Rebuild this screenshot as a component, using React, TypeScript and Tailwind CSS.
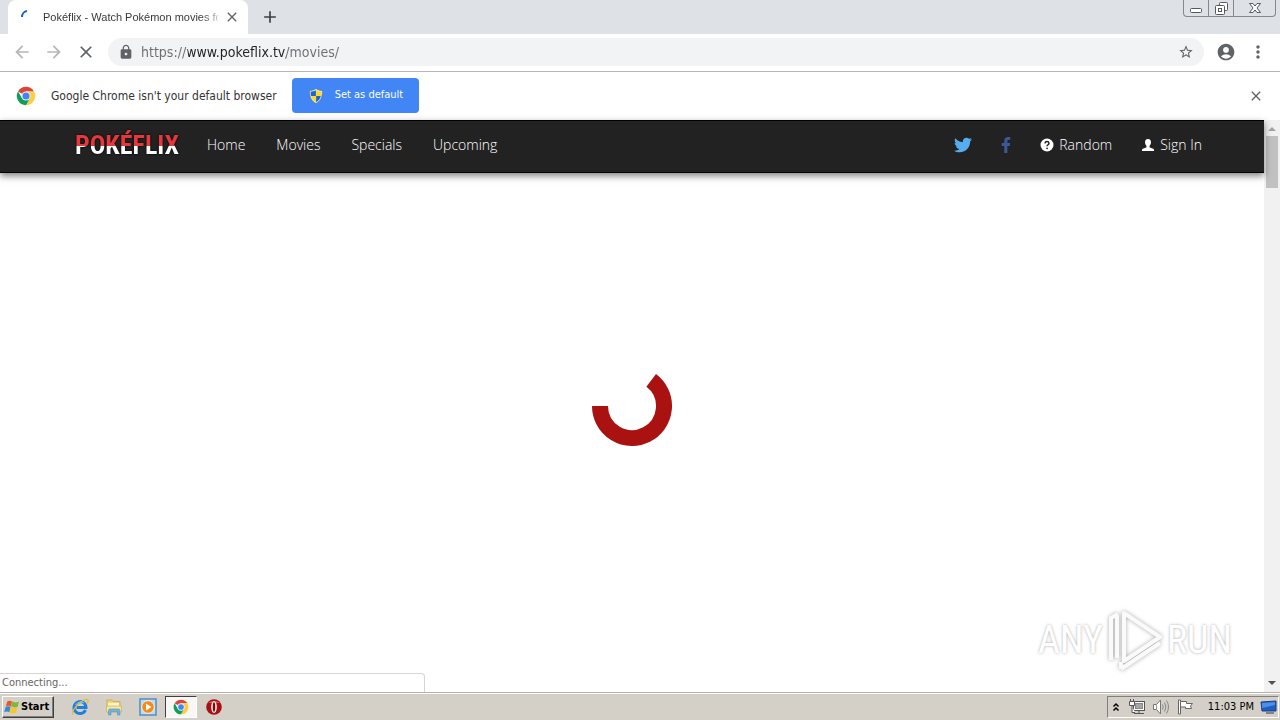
import { ReactNode } from "react";
import { FaFacebookF, FaTwitter } from "react-icons/fa";
import {
  MdAccountCircle,
  MdAdd,
  MdArrowBack,
  MdArrowForward,
  MdClose,
  MdLock,
  MdMoreVert,
  MdStarBorder,
} from "react-icons/md";

const ChromeLogo = ({ className }: { className: string }) => (
  <svg viewBox="0 0 48 48" className={className} aria-hidden="true">
    <circle cx="24" cy="24" r="22" fill="#fff" />
    <path d="M24 24 4.900 13A22 22 0 0 1 43.100 13H24Z" fill="#db4437" />
    <path d="M24 13h19.100A22 22 0 0 1 24 46l9.500-16.500Z" fill="#ffcd40" />
    <path d="M4.900 13 14.500 29.500 33.500 29.500 24 46A22 22 0 0 1 4.900 13Z" fill="#0f9d58" />
    <circle cx="24" cy="24" r="11" fill="#f1f1f1" />
    <circle cx="24" cy="24" r="8.500" fill="#4285f4" />
  </svg>
);

const Shield = () => (
  <svg viewBox="0 0 16 16" className="h-4 w-4" aria-hidden="true">
    <path d="M8 0.500C6 2 4 2.500 1.500 2.500 1.500 9 3 13 8 15.500 13 13 14.500 9 14.500 2.500 12 2.500 10 2 8 0.500Z" fill="#dfe6ee" stroke="#5b6f8a" strokeWidth="0.600" />
    <path d="M7.900 2.200C6 3.200 4.500 3.600 2.700 3.700 2.700 5.500 2.800 6.500 3.100 7.900H7.900Z" fill="#1f63c9" />
    <path d="M8.100 2.200C10 3.200 11.500 3.600 13.300 3.700 13.300 5.500 13.200 6.500 12.900 7.900H8.100Z" fill="#ffd91f" />
    <path d="M7.900 8.100H3.200C4 11 5.200 12.800 7.900 14.300Z" fill="#ffd91f" />
    <path d="M8.100 8.100H12.800C12 11 10.800 12.800 8.100 14.300Z" fill="#1f63c9" />
  </svg>
);

const WindowsFlag = () => (
  <svg viewBox="0 0 16 16" className="h-4 w-4" aria-hidden="true">
    <path d="M3.200 2.500Q5.500 1 8 2.400L6.900 7.500Q4.400 6 1.900 7.500Z" fill="#e8562a" />
    <path d="M8.300 2.600Q11.500 4.200 15 2.500L13.600 7.900Q10.200 9 7.100 7.600Z" fill="#7cb83a" />
    <path d="M1.600 7.900Q4 6.600 6.700 7.900L5.300 13.200Q2.800 11.700 0.200 13.200Z" fill="#3a86d8" />
    <path d="M7 8.100Q10 9.700 13.300 8.300L11.900 13.700Q8.800 15 5.600 13.400Z" fill="#f6c62c" />
  </svg>
);

const ExplorerIcon = () => (
  <svg viewBox="0 0 18 18" className="h-[18px] w-[18px]" aria-hidden="true">
    <path d="M14.500 12A6 6 0 1 1 15 9.500H5.500" fill="none" stroke="#1f7fdc" strokeWidth="3" />
    <path d="M2 16.500C-1 13 12 0 16.500 1.500 18 2.500 16.500 5 15.500 6" fill="none" stroke="#e9b93a" strokeWidth="1.400" />
    <path d="M4.500 7A6 6 0 0 1 13 5" fill="none" stroke="#7cc6f5" strokeWidth="1" />
  </svg>
);

const FolderIcon = () => (
  <svg viewBox="0 0 18 18" className="h-[18px] w-[18px]" aria-hidden="true">
    <path d="M2 2h5l1 1.500h7V14H2Z" fill="#f0d67a" stroke="#c9a64a" strokeWidth="0.800" />
    <path d="M3 5h11v4H3Z" fill="#fff7d0" />
    <path d="M1.500 8h15v6h-15Z" fill="#f8e49a" stroke="#d3b560" strokeWidth="0.800" />
    <path d="M3.500 17v-4.500q0-1.500 1.500-1.500h8.500q1.500 0 1.500 1.500V17h-2.500v-3.500h-6.500V17Z" fill="#6fb4e4" stroke="#3f88c0" strokeWidth="0.500" />
  </svg>
);

const MediaIcon = () => (
  <svg viewBox="0 0 18 18" className="h-[18px] w-[18px]" aria-hidden="true">
    <rect x="1" y="1" width="16" height="16" fill="#b9dcf4" stroke="#4b8fc9" strokeWidth="1.500" />
    <circle cx="9" cy="9" r="6.300" fill="#f28a1c" stroke="#fff" strokeWidth="0.800" />
    <path d="M7 5.500 12.500 9 7 12.500Z" fill="#fff" />
  </svg>
);

const OperaIcon = () => (
  <svg viewBox="0 0 18 18" className="h-[18px] w-[18px]" aria-hidden="true">
    <circle cx="9" cy="9" r="7.800" fill="#a81014" />
    <path d="M3 5a8 6 0 0 1 12 0Z" fill="#d9595b" />
    <ellipse cx="9" cy="9" rx="2.900" ry="6" fill="#f4e4e2" />
    <ellipse cx="9" cy="9" rx="1.200" ry="4.800" fill="#7a0a0c" />
  </svg>
);

const NetworkIcon = () => (
  <svg viewBox="0 0 18 18" className="h-[18px] w-[18px]" aria-hidden="true">
    <rect x="5.500" y="3.500" width="11" height="9" fill="#fff" stroke="#555" />
    <rect x="7.500" y="5.500" width="7" height="5" fill="#a6a6a6" stroke="#888" />
    <path d="M11 13v2M6 15.500h10" stroke="#555" />
    <path d="M2.500 1v3M5.500 1v3M1.500 3.500h5v4h-5ZM4 8v6.500h3" fill="#fff" stroke="#555" />
  </svg>
);

const SpeakerIcon = () => (
  <svg viewBox="0 0 18 18" className="h-[18px] w-[18px]" aria-hidden="true">
    <path d="M1.500 6.500h3l4-4.500v14l-4-4.500h-3Z" fill="#fff" stroke="#777" />
    <path d="M4.500 6.500v5" stroke="#999" />
    <path d="M10.500 6.500q1.500 2.500 0 5M12.500 4.500q3 4.500 0 9M14.500 2.500q4 6.500 0 13" fill="none" stroke="#888" />
  </svg>
);

const FlagIcon = () => (
  <svg viewBox="0 0 18 18" className="h-[18px] w-[18px]" aria-hidden="true">
    <path d="M2.500 2h2v14h-2Z" fill="#fff" stroke="#666" />
    <path d="M4.500 3.500h6v2h6l-2 2.500 1 2.500h-6v-1.500h-5Z" fill="#fff" stroke="#666" />
  </svg>
);

const MonitorIcon = () => (
  <svg viewBox="0 0 18 18" className="h-[18px] w-[18px]" aria-hidden="true">
    <path d="M1 4l15-1v10H2Z" fill="#1f5fc4" stroke="#1b3f86" />
    <path d="M2 5l13-1v3L2 10Z" fill="#4a90e6" />
    <path d="M6 15h8" stroke="#6a6a6a" strokeWidth="1.500" />
  </svg>
);

const NavLink = ({ children }: { children: ReactNode }) => (
  <a href="#" className="flex items-center gap-[5px] text-[14px] leading-5 text-white">
    {children}
  </a>
);

const TaskIcon = ({ label, children }: { label: string; children: ReactNode }) => (
  <button type="button" aria-label={label} className="flex h-6 w-[34px] items-center justify-center">
    {children}
  </button>
);

const TabStrip = () => (
  <header className="flex h-[34px] shrink-0 justify-between bg-[#dee1e6]">
    <div className="flex items-end pl-2">
      <div className="flex h-full w-60 items-center rounded-t-lg bg-white pr-2 pl-3">
        <svg viewBox="0 0 16 16" className="h-4 w-4 shrink-0" aria-hidden="true">
          <path d="M2 8a6 6 0 0 1 5-5.900" fill="none" stroke="#1a62c5" strokeWidth="2" />
        </svg>
        <span className="ml-[7px] w-[175px] bg-linear-to-r from-[#333] from-90% to-[#ccc] bg-clip-text font-['Liberation_Sans',sans-serif] text-[11px] whitespace-nowrap text-transparent">
          Pokéflix - Watch Pokémon movies for
        </span>
        <button type="button" aria-label="Close tab" className="ml-1.5 text-[#5f6368]">
          <MdClose className="h-4 w-4" stroke="currentColor" />
        </button>
      </div>
      <button type="button" aria-label="New tab" className="ml-3 flex h-full items-center text-[#3c4043]">
        <MdAdd className="h-5 w-5" stroke="currentColor" />
      </button>
    </div>
    <div className="mr-1 flex h-[17px] rounded-b border border-t-0 border-[#85898f] text-[#55585d]">
      <button type="button" aria-label="Minimize" className="flex w-[25px] items-center justify-center border-r border-[#85898f]">
        <svg viewBox="0 0 12 12" className="h-3 w-3">
          <rect x="0.500" y="6.500" width="11" height="4" rx="1" fill="#fff" stroke="currentColor" />
        </svg>
      </button>
      <button type="button" aria-label="Restore" className="flex w-[25px] items-center justify-center border-r border-[#85898f]">
        <svg viewBox="0 0 13 13" className="h-[13px] w-[13px]" fill="#fff" stroke="currentColor">
          <rect x="4.500" y="0.500" width="8" height="8" rx="1" />
          <rect x="0.500" y="3.500" width="9" height="9" rx="1" />
          <rect x="3.500" y="6.500" width="3" height="3" />
        </svg>
      </button>
      <button type="button" aria-label="Close" className="flex w-[41px] items-center justify-center">
        <svg viewBox="0 0 12 12" className="h-3 w-3" fill="#fff" stroke="currentColor">
          <path d="M0.500 1.500H4L6 4 8 1.500H11.500L8 6 11.500 10.500H8L6 8 4 10.500H0.500L4 6Z" />
        </svg>
      </button>
    </div>
  </header>
);

const Toolbar = () => (
  <div className="flex h-[38px] shrink-0 items-center border-b border-[#b6b4b6] bg-white px-3 pb-px text-[#5f6368]">
    <div className="flex items-center gap-3">
      <button type="button" aria-label="Back" className="text-[#b4b6b8]"><MdArrowBack className="h-5 w-5" /></button>
      <button type="button" aria-label="Forward" className="text-[#b4b6b8]"><MdArrowForward className="h-5 w-5" /></button>
      <button type="button" aria-label="Stop"><MdClose className="h-5 w-5" stroke="currentColor" /></button>
    </div>
    <div className="ml-3 flex h-7 grow items-center rounded-full bg-[#f1f3f4] px-2.5">
      <MdLock className="h-4 w-4" />
      <input
        aria-label="Address"
        defaultValue="https://www.pokeflix.tv/movies/"
        className="ml-[7px] h-6 grow bg-[linear-gradient(to_right,#6a6e73_47px,#202124_47px,#202124_145px,#6a6e73_145px)] bg-clip-text text-[14px] text-transparent outline-none"
      />
      <button type="button" aria-label="Bookmark"><MdStarBorder className="h-4 w-4" stroke="currentColor" /></button>
    </div>
    <button type="button" aria-label="Profile" className="ml-3"><MdAccountCircle className="h-5 w-5" /></button>
    <button type="button" aria-label="Menu" className="ml-3"><MdMoreVert className="h-5 w-5" /></button>
  </div>
);

const DefaultBrowserBar = () => (
  <div className="flex h-12 shrink-0 items-center bg-white px-4 pb-px">
    <ChromeLogo className="h-5 w-5" />
    <span className="ml-[15px] text-[12px] text-[#333]">Google Chrome isn't your default browser</span>
    <button type="button" className="ml-[15px] flex h-[35px] w-[127px] items-center gap-[11px] rounded bg-[#4285f4] pl-4 text-[11px] text-white">
      <Shield />
      Set as default
    </button>
    <button type="button" aria-label="Dismiss" className="ml-auto text-[#5f6368]">
      <MdClose className="h-4 w-4" stroke="currentColor" />
    </button>
  </div>
);

const SiteNav = () => (
  <nav className="z-10 flex h-[53px] shrink-0 items-center border-t border-b border-black bg-[#222] pr-[62px] pb-1 pl-[74px] font-['Open_Sans','Noto_Sans',sans-serif] font-light shadow-[0_3px_7px_rgba(0,0,0,0.5)]">
    <a
      href="#"
      className="w-[106px] bg-[linear-gradient(#e5383b_52%,#fff_52%)] bg-clip-text text-center font-['Roboto_Condensed','Liberation_Sans_Narrow',sans-serif] text-[26px] leading-8 font-bold text-transparent drop-shadow-[0_0_1px_#000]"
    >
      POKÉFLIX
    </a>
    <div className="ml-[27px] flex gap-[31px]">
      <NavLink>Home</NavLink>
      <NavLink>Movies</NavLink>
      <NavLink>Specials</NavLink>
      <NavLink>Upcoming</NavLink>
    </div>
    <div className="ml-auto flex items-center gap-[29px]">
      <a href="#" aria-label="Twitter" className="text-[#55acee]"><FaTwitter className="h-[18px] w-[18px]" /></a>
      <a href="#" aria-label="Facebook" className="text-[#3b5998]"><FaFacebookF className="h-4 w-2.5" /></a>
      <NavLink>
        <svg viewBox="0 0 14 14" className="h-3.5 w-3.5" aria-hidden="true">
          <circle cx="7" cy="7" r="6.500" fill="#fff" />
          <path d="M5 5.300Q5.200 3.600 7 3.600T9 5.300Q9 6.200 7.900 6.800 7.100 7.200 7.100 8.200" fill="none" stroke="#222" strokeWidth="1.500" />
          <circle cx="7.100" cy="10.300" r="0.900" fill="#222" />
        </svg>
        Random
      </NavLink>
      <NavLink>
        <svg viewBox="0 0 14 14" className="h-3.5 w-3.5" aria-hidden="true">
          <path d="M7 1C4.800 1 4 2.500 4 4.300 4 6 4.900 7.200 5.500 7.900V9.300C4.500 10 1.500 10.300 1 11.500V13H13V11.500C12.500 10.300 9.500 10 8.500 9.300V7.900C9.100 7.200 10 6 10 4.300 10 2.500 9.200 1 7 1Z" fill="#fff" />
        </svg>
        Sign In
      </NavLink>
    </div>
  </nav>
);

const Watermark = () => (
  <div className="absolute right-8 bottom-5 flex items-center gap-1 font-['Roboto_Condensed','Liberation_Sans_Narrow',sans-serif] text-[38px] leading-none text-white [text-shadow:0_0_3px_#aaa]">
    <span>ANY</span>
    <svg viewBox="0 0 56 64" className="h-16 w-14 drop-shadow-[0_0_2px_#aaa]" fill="none" stroke="#fafafa" strokeWidth="4" strokeLinejoin="round" aria-hidden="true">
      <path d="M17 5 53 29 17 53Z" />
      <path d="M4 52V10L11 6M10 8V50M14 61 53 35M14 61V54" />
    </svg>
    <span>RUN</span>
  </div>
);

const Scrollbar = () => (
  <div className="flex w-4 shrink-0 flex-col items-center bg-[#f1f1f1]" aria-hidden="true">
    <svg viewBox="0 0 16 16" className="h-4 w-4"><path d="M4 11 8 7 12 11Z" fill="#a3a3a3" /></svg>
    <div className="h-[52px] w-3 bg-[#c1c1c1]" />
    <svg viewBox="0 0 16 16" className="mt-auto h-4 w-4"><path d="M4 5 8 9 12 5Z" fill="#505050" /></svg>
  </div>
);

const Taskbar = () => (
  <footer className="flex h-7 shrink-0 items-center border-t border-[#b5b0a8] bg-[#d4d0c8] pt-px pl-0.5 shadow-[inset_0_1px_0_#fff]">
    <button type="button" className="flex h-[22px] w-[52px] items-center gap-px border border-t-white border-r-[#404040] border-b-[#404040] border-l-white pl-px text-[11px] font-bold text-black shadow-[inset_-1px_-1px_0_#808080]">
      <WindowsFlag />
      Start
    </button>
    <div className="ml-[9px] flex items-center">
      <TaskIcon label="Internet Explorer"><ExplorerIcon /></TaskIcon>
      <TaskIcon label="Windows Explorer"><FolderIcon /></TaskIcon>
      <TaskIcon label="Media Player"><MediaIcon /></TaskIcon>
      <button type="button" aria-label="Google Chrome" className="flex h-[22px] w-8 items-center justify-center border border-t-[#404040] border-r-white border-b-white border-l-[#404040] bg-[#f8f7f5]">
        <ChromeLogo className="h-4 w-4" />
      </button>
      <TaskIcon label="Opera"><OperaIcon /></TaskIcon>
    </div>
    <div className="mr-px ml-auto flex h-[22px] items-center gap-1.5 border border-t-[#808080] border-r-white border-b-white border-l-[#808080] pl-1 text-[11px] text-black">
      <button type="button" aria-label="Show hidden icons" className="w-2">
        <svg viewBox="0 0 8 10" className="h-2.5 w-2" fill="none" stroke="#000" strokeWidth="1.500">
          <path d="M1.500 4.500 4 2 6.500 4.500M1.500 8.500 4 6 6.500 8.500" />
        </svg>
      </button>
      <div className="flex gap-1.5 pl-0.5">
        <NetworkIcon />
        <SpeakerIcon />
        <FlagIcon />
      </div>
      <span className="ml-2 whitespace-nowrap">11:03 PM</span>
      <MonitorIcon />
    </div>
  </footer>
);

export default function App() {
  return (
    <div className="flex h-screen flex-col overflow-hidden bg-white font-['DejaVu_Sans_Condensed','DejaVu_Sans',sans-serif]">
      <TabStrip />
      <Toolbar />
      <DefaultBrowserBar />
      <div className="flex min-h-0 grow">
        <main className="relative flex grow flex-col">
          <SiteNav />
          <div className="absolute inset-0 flex items-center justify-center" role="status" aria-label="Loading">
            <svg viewBox="-40 -40 80 80" className="h-20 w-20">
              <path d="M-32 0A32 32 0 1 0 19.200-25.600" fill="none" stroke="#a91210" strokeWidth="16" />
            </svg>
          </div>
          <Watermark />
          <div className="absolute bottom-0 left-0 flex h-[19px] w-[425px] items-center rounded-tr border-t border-r border-[#d5d5d5] bg-white pl-0.5 text-[11px] text-[#666]">
            Connecting...
          </div>
        </main>
        <Scrollbar />
      </div>
      <Taskbar />
    </div>
  );
}
